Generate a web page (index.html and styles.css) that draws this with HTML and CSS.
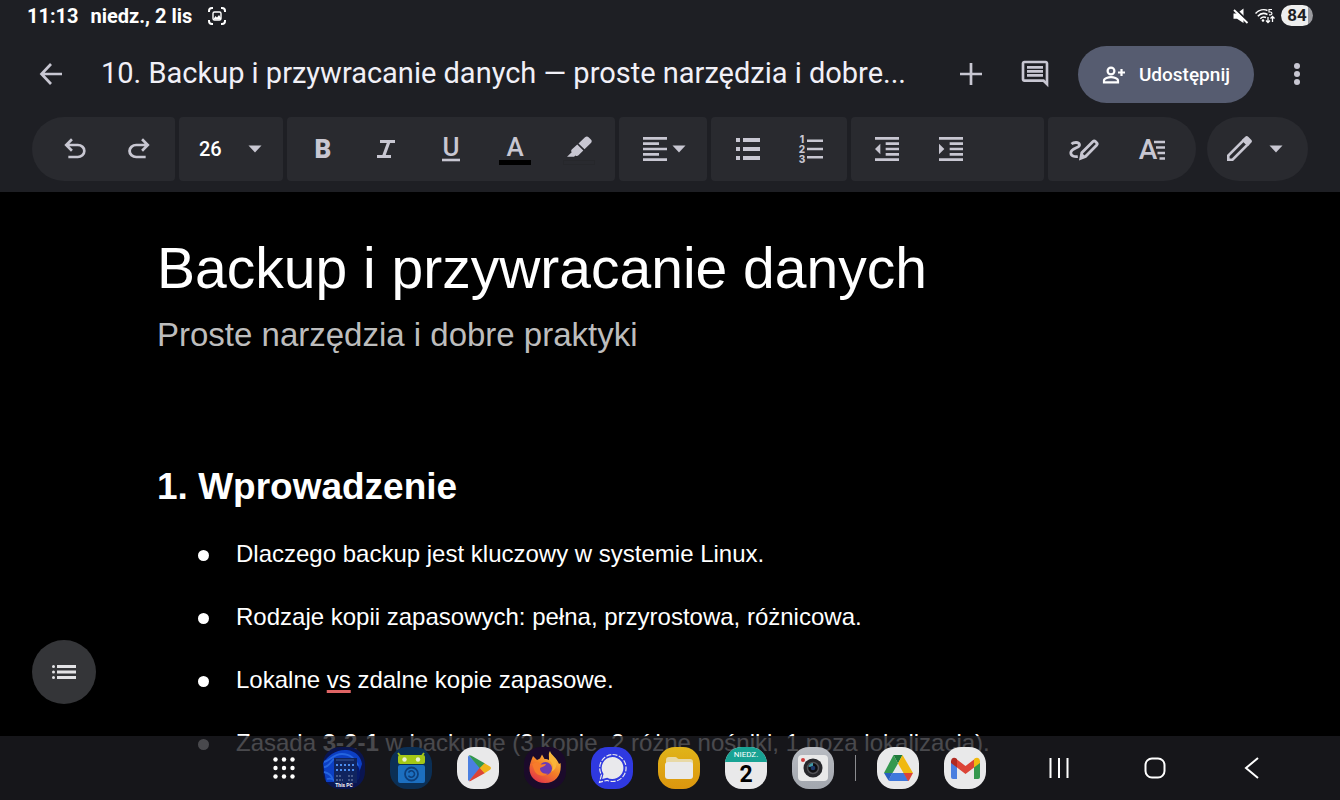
FILE: index.html
```
<!DOCTYPE html>
<html lang="pl">
<head>
    <meta charset="UTF-8">
    <meta name="viewport" content="width=device-width, initial-scale=1.0">
    <title>10. Backup i przywracanie danych</title>
    <link rel="stylesheet" href="styles.css">
</head>
<body>

    <header class="header">
        <div class="status-bar">
            <span>11:13</span>
            <span class="date">niedz., 2 lis</span>
            <svg class="capture" width="18" height="18" viewBox="0 0 18 18" fill="none" stroke="#fff" stroke-width="2">
                <path d="M1 5V4a3 3 0 0 1 3-3h1M13 1h1a3 3 0 0 1 3 3v1M17 13v1a3 3 0 0 1-3 3h-1M5 17H4a3 3 0 0 1-3-3v-1"/>
                <rect x="5" y="5" width="8" height="8" rx="1.5" stroke-width="1.4"/>
                <path d="M5.5 12l2-3 1.5 1.5L11 8l2 3v1.5H5.5z" fill="#fff" stroke="none"/>
            </svg>
            <div class="status-icons">
                <svg width="16" height="16" viewBox="0 0 16 16">
                    <path d="M.5 5.5H4L10.500.5V15L4 10.800H.5z" fill="#fff"/>
                    <path d="M2 .5l14 14" stroke="#1e1f24" stroke-width="2"/>
                    <path d="M1 2l13.500 13" stroke="#fff" stroke-width="1.8"/>
                </svg>
                <svg width="20" height="16" viewBox="0 0 20 16" fill="none" stroke="#fff" stroke-width="1.5">
                    <path d="M.5 5.500C4 1.800 9 1 12.500 2.500M2.800 8.200c2.500-2.700 6.500-3.400 9.700-1.700M5.300 10.700c1.500-1.500 3.600-2 5.700-1.200"/>
                    <circle cx="8" cy="12.5" r="1.3" fill="#fff" stroke="none"/>
                    <path d="M17 1.500h-3v2.500h1.500a1.400 1.400 0 0 1 0 2.800H14" stroke-width="1.2"/>
                    <path d="M13 9v5.500M11 12.500l2 2 2-2M17.500 14V8.500M15.500 10.500l2-2 2 2" stroke-width="1.3"/>
                </svg>
                <span class="battery">84</span>
            </div>
        </div>

        <div class="app-bar">
            <button class="icon-btn" aria-label="Wstecz">
                <svg class="icon" viewBox="0 0 32 32" fill="none" stroke="currentColor" stroke-width="2.7"><path d="M27 16H7M16 6L6.500 16 16 26"/></svg>
            </button>
            <h1 class="file-name">10. Backup i przywracanie danych — proste narzędzia i dobre...</h1>
            <button class="icon-btn" aria-label="Wstaw">
                <svg class="icon" viewBox="0 0 32 32" fill="none" stroke="currentColor" stroke-width="2.7"><path d="M16 5v22M5 16h22"/></svg>
            </button>
            <button class="icon-btn" aria-label="Komentarze">
                <svg class="icon" viewBox="0 0 24 24" fill="currentColor"><path d="M21.990 4c0-1.100-.89-2-1.990-2H4c-1.100 0-2 .9-2 2v12c0 1.100.9 2 2 2h14l4 4-.01-18zM20 4v13.170L18.830 16H4V4h16zM6 12h12v2H6zm0-3h12v2H6zm0-3h12v2H6z"/></svg>
            </button>
            <button class="share-btn">
                <svg width="24" height="20" viewBox="0 0 24 20" fill="none" stroke="currentColor" stroke-width="2.2">
                    <circle cx="9" cy="6" r="3.4"/>
                    <path d="M2 17.300v-1.800c0-2.300 4.600-3.400 7-3.400s7 1.100 7 3.400v1.800zM19.500 4v7M16 7.500h7"/>
                </svg>
                Udostępnij
            </button>
            <button class="icon-btn" aria-label="Więcej opcji">
                <svg class="icon" viewBox="0 0 32 32" fill="currentColor"><circle cx="16" cy="8" r="3"/><circle cx="16" cy="16" r="3"/><circle cx="16" cy="24" r="3"/></svg>
            </button>
        </div>

        <div class="toolbar">
            <div class="group group-first">
                <button class="icon-btn" aria-label="Cofnij">
                    <svg class="icon" viewBox="0 -960 960 960" fill="currentColor"><path d="M280-200v-80h284q63 0 109.500-40T720-420q0-60-46.500-100T564-560H312l104 104-56 56-200-200 200-200 56 56-104 104h252q97 0 169.500 63T800-420q0 94-72.500 157T564-200H280Z"/></svg>
                </button>
                <button class="icon-btn" aria-label="Ponów">
                    <svg class="icon" viewBox="0 -960 960 960" fill="currentColor"><path d="M396-200q-97 0-169.500-63T154-420q0-94 72.500-157T396-640h252L544-744l56-56 200 200-200 200-56-56 104-104H396q-63 0-109.500 40T240-420q0 60 46.500 100T396-280h284v80H396Z"/></svg>
                </button>
            </div>
            <div class="group">
                <label class="size-box">
                    <select class="size-select" aria-label="Rozmiar czcionki">
                        <option>24</option>
                        <option selected>26</option>
                        <option>28</option>
                    </select>
                    <svg class="caret" viewBox="0 0 14 8" fill="currentColor"><path d="M.5.500h13L7 7.500z"/></svg>
                </label>
            </div>
            <div class="group">
                <button class="icon-btn" aria-label="Pogrubienie">
                    <svg class="icon" viewBox="0 0 32 32"><text class="glyph glyph-bold" x="16" y="25">B</text></svg>
                </button>
                <button class="icon-btn" aria-label="Kursywa">
                    <svg class="icon" viewBox="0 0 32 32" fill="none" stroke="currentColor" stroke-width="3.2"><path d="M9 8.500h15M6 23.500h14M18 8.500l-5.500 15"/></svg>
                </button>
                <button class="icon-btn" aria-label="Podkreślenie">
                    <svg class="icon" viewBox="0 0 32 32"><text class="glyph" x="16" y="23">U</text><path d="M7 27h18" stroke="currentColor" stroke-width="2.6"/></svg>
                </button>
                <button class="icon-btn" aria-label="Kolor tekstu">
                    <svg class="icon" viewBox="0 0 32 32"><text class="glyph" x="16" y="23">A</text><rect y="27" width="32" height="5" fill="#000"/></svg>
                </button>
                <button class="icon-btn" aria-label="Kolor wyróżnienia">
                    <svg class="icon" viewBox="0 0 32 32" fill="currentColor">
                        <path d="M15.500 10.500l6.500-6.200c1.200-1.200 2.500-1.200 3.600-.1l2.300 2.300c1.100 1.100 1.100 2.400 0 3.500L21.500 16.200zM14.300 11.600l6 5.800-4.800 4.800c-1 1-2 1.100-3 .3L11 23.800H4l4.700-4.600c-.8-1-.7-2 .3-3z"/>
                        <rect x=".5" y="27.5" width="31" height="4" fill="none" stroke="#26272b"/>
                    </svg>
                </button>
            </div>
            <div class="group">
                <button class="align-btn" aria-label="Wyrównanie">
                    <svg class="icon" viewBox="0 0 24 24" fill="currentColor"><path d="M3 3h18v2H3zM3 7h12v2H3zM3 11h18v2H3zM3 15h12v2H3zM3 19h18v2H3z"/></svg>
                    <svg class="caret" viewBox="0 0 14 8" fill="currentColor"><path d="M.5.500h13L7 7.500z"/></svg>
                </button>
            </div>
            <div class="group">
                <button class="icon-btn" aria-label="Lista punktowana">
                    <svg class="icon" viewBox="0 0 32 32" fill="currentColor"><path d="M5 5h4v4H5zM12 5h17v4H12zM5 14h4v4H5zM12 14h17v4H12zM5 23h4v4H5zM12 23h17v4H12z"/></svg>
                </button>
                <button class="icon-btn" aria-label="Lista numerowana">
                    <svg class="icon" viewBox="0 0 32 32" fill="currentColor">
                        <text class="digit" x="7" y="10">1</text>
                        <text class="digit" x="7" y="20">2</text>
                        <text class="digit" x="7" y="30">3</text>
                        <path d="M12 6.500h16V9H12zM12 14.700h16v2.500H12zM12 23h16v2.500H12z"/>
                    </svg>
                </button>
            </div>
            <div class="group group-wide">
                <button class="icon-btn" aria-label="Zmniejsz wcięcie">
                    <svg class="icon" viewBox="0 0 24 24" fill="currentColor"><path d="M11 17h10v-2H11v2zm-8-5l4 4V8l-4 4zm0 9h18v-2H3v2zM3 3v2h18V3H3zm8 6h10V7H11v2zm0 4h10v-2H11v2z"/></svg>
                </button>
                <button class="icon-btn" aria-label="Zwiększ wcięcie">
                    <svg class="icon" viewBox="0 0 24 24" fill="currentColor"><path d="M11 17h10v-2H11v2zM3 8v8l4-4-4-4zm0 13h18v-2H3v2zM3 3v2h18V3H3zm8 6h10V7H11v2zm0 4h10v-2H11v2z"/></svg>
                </button>
            </div>
            <div class="group group-last">
                <button class="icon-btn" aria-label="Pismo odręczne">
                    <svg class="icon" viewBox="0 0 32 32" fill="none" stroke="currentColor" stroke-width="2.8">
                        <path d="M3.500 11c2-1.800 7.500-2.500 8 .8.400 3.200-8.500 3.400-8.700 8 0 3.200 3.500 4.200 7 3.800"/>
                        <path d="M12.800 25.300l1-5.600L25 8.600c.8-.8 1.600-.8 2.400 0l1.200 1.200c.8.800.8 1.600 0 2.400L17.500 23.500z"/>
                        <path d="M14 20l3.500 3.500-5.500 2.500z" fill="currentColor" stroke="none"/>
                    </svg>
                </button>
                <button class="icon-btn" aria-label="Formatowanie">
                    <svg class="icon" viewBox="0 0 32 32">
                        <text class="glyph glyph-format" x="12" y="26">A</text>
                        <path d="M18 9h11M20 14.500h9M21.500 20H29M23.500 25.500H29" stroke="currentColor" stroke-width="2.4"/>
                    </svg>
                </button>
            </div>
            <div class="group group-mode">
                <button class="mode-btn" aria-label="Tryb edycji">
                    <svg class="icon" viewBox="0 0 32 32">
                        <path d="M5.300 26.700v-4.200L20.500 7.300l4.200 4.200L9.500 26.700z" fill="none" stroke="currentColor" stroke-width="2.6"/>
                        <path d="M19 7l3.200-3.200c1-1 2-1 3 0l3 3c1 1 1 2 0 3L25 13z" fill="currentColor"/>
                    </svg>
                    <svg class="caret" viewBox="0 0 14 8" fill="currentColor"><path d="M.5.500h13L7 7.500z"/></svg>
                </button>
            </div>
        </div>
    </header>

    <main class="document">
        <h2 class="doc-title">Backup i przywracanie danych</h2>
        <p class="doc-subtitle">Proste narzędzia i dobre praktyki</p>
        <h3 class="doc-heading">1. Wprowadzenie</h3>
        <ul class="doc-list">
            <li>Dlaczego backup jest kluczowy w systemie Linux.</li>
            <li>Rodzaje kopii zapasowych: pełna, przyrostowa, różnicowa.</li>
            <li>Lokalne <span class="misspelled">vs</span> zdalne kopie zapasowe.</li>
            <li>Zasada <b>3-2-1</b> w backupie (3 kopie, 2 różne nośniki, 1 poza lokalizacją).</li>
        </ul>
    </main>

    <button class="outline-btn" aria-label="Konspekt">
        <svg width="24" height="16" viewBox="0 0 24 16" fill="currentColor"><path d="M5 1h19v3H5zM5 6.500h19v3H5zM5 12h19v3H5z"/><circle cx="1.5" cy="2.5" r="1.5"/><circle cx="1.5" cy="8" r="1.5"/><circle cx="1.5" cy="13.5" r="1.5"/></svg>
    </button>

    <nav class="taskbar">
        <button class="all-apps" aria-label="Aplikacje">
            <svg width="24" height="24" viewBox="0 0 24 24" fill="#fff">
                <circle cx="3.5" cy="3.5" r="2.2"/><circle cx="12" cy="3.5" r="2.2"/><circle cx="20.5" cy="3.5" r="2.2"/>
                <circle cx="3.5" cy="12" r="2.2"/><circle cx="12" cy="12" r="2.2"/><circle cx="20.5" cy="12" r="2.2"/>
                <circle cx="3.5" cy="20.5" r="2.2"/><circle cx="12" cy="20.5" r="2.2"/><circle cx="20.5" cy="20.5" r="2.2"/>
            </svg>
        </button>
        <div class="apps">
            <button class="app app-pc" aria-label="This PC">
                <svg viewBox="0 0 42 42">
                    <path d="M0 16C5 8 14 2 24 3c9 1 14 7 15 14l-6 18H3z" fill="#0c3fc4"/>
                    <path d="M1 15c6-1 9-8 18-8 8 0 14 5 16 12M1 20c5 0 7-6 10-8M1 25c5 1 8 4 9 8M4 32c4-1 7 0 9 4" fill="none" stroke="#2565e0" stroke-width="1.8"/>
                    <path d="M33 17c4 4 5 9 3 15l-5 4z" fill="#071a6a"/>
                    <rect x="11" y="11" width="23" height="25" fill="#10245f"/>
                    <path d="M13 13h18" stroke="#3b5899" stroke-width="1"/>
                    <path d="M13 18h20M13 23h20" stroke="#4b8df0" stroke-width="2" stroke-dasharray="2 2"/>
                    <path d="M13 29h6M25 29h6M13 33h7M25 33h5" stroke="#7c8db4" stroke-width="1.2" stroke-dasharray="2 1"/>
                    <text class="pc-label" x="21" y="40">This PC</text>
                </svg>
            </button>
            <button class="app app-droid" aria-label="F-Droid">
                <svg viewBox="0 0 42 42">
                    <path d="M8 6l3 4M34 6l-3 4" stroke="#a4c716" stroke-width="1.8"/>
                    <rect x="8" y="8" width="27" height="9" rx="2" fill="#a4c716"/>
                    <circle cx="14.5" cy="12.5" r="2.2" fill="#e8efd0"/><circle cx="28" cy="12.5" r="2.2" fill="#e8efd0"/>
                    <rect x="8" y="18" width="27" height="18" rx="2" fill="#1c6fc0"/>
                    <circle cx="21.5" cy="27" r="6.5" fill="none" stroke="#0d3f7c" stroke-width="1.8"/>
                    <path d="M18.500 25.500a3.200 3.200 0 1 1 0 3" fill="none" stroke="#0d3f7c" stroke-width="1.6"/>
                </svg>
            </button>
            <button class="app app-light" aria-label="Sklep Play">
                <svg viewBox="0 0 42 42">
                    <path d="M12 8.500L24 21 12 34c-.8-.4-1-1-1-2V10.500c0-1 .3-1.600 1-2z" fill="#4a7fe0"/>
                    <path d="M12 8.500c.8-.4 1.500-.3 2.500.3L28 16.500 23 21.500z" fill="#34984e"/>
                    <path d="M12 34c.8.400 1.500.200 2.500-.4L28 26l-5-5.500z" fill="#dc4437"/>
                    <path d="M27.500 16.200l5.500 3.300c1.300.8 1.300 2.400 0 3.200l-5.500 3.500L22.800 21z" fill="#f0b41a"/>
                </svg>
            </button>
            <button class="app app-fox" aria-label="Firefox">
                <svg viewBox="0 0 42 42">
                    <defs>
                        <linearGradient id="fox" x1=".8" y1="0" x2=".2" y2="1">
                            <stop offset="0" stop-color="#f7d34a"/><stop offset=".5" stop-color="#f58026"/><stop offset="1" stop-color="#e0304c"/>
                        </linearGradient>
                    </defs>
                    <path d="M9 9l4 4 3-1.500 2-4 2.500 4.500c2 0 4 .5 4.500 1 .3-3-1-6 1-9 1 4 7 7 9 13l1.500-1c1.500 11-4 20-15.500 20C11 36 5 29 5.500 20.500 6 16 7.500 13 9 9z" fill="url(#fox)"/>
                    <circle cx="21.500" cy="21.500" r="6.5" fill="#6c3ab5"/>
                    <path d="M8 17c4-2 7-1.500 9 .5l5-.5c-1 3-5 2.500-6 4.500 0 3 3 6 8 5-4 4-12 2.500-14-4z" fill="#f77b2b"/>
                    <path d="M25 13c4 3 5 8 2 12 8-4 7-13-2-19z" fill="#f9b439"/>
                </svg>
            </button>
            <button class="app app-signal" aria-label="Signal">
                <svg viewBox="0 0 42 42">
                    <path d="M21.500 10a11 11 0 1 1-5.300 20.700l-5 1.300 1.300-5A11 11 0 0 1 21.500 10z" fill="#e9e9ec"/>
                    <path d="M21.500 7.500a13.500 13.500 0 1 1-5.500 25.800l-7.500 2 2-7.500A13.500 13.500 0 0 1 21.500 7.500z" fill="none" stroke="#e9e9ec" stroke-width="1.2" stroke-dasharray="5 1.5"/>
                </svg>
            </button>
            <button class="app app-files" aria-label="Moje pliki">
                <svg viewBox="0 0 42 42">
                    <path d="M8 13c0-2 1-3 3-3h6c2 0 2.500 2 4 2h11c2 0 3 1 3 3v5H8z" fill="#e8d9a6"/>
                    <rect x="7" y="15" width="28" height="17" rx="3" fill="#e9e9e9"/>
                </svg>
            </button>
            <button class="app app-light app-calendar" aria-label="Kalendarz">
                <span class="cal-month">NIEDZ.</span>
                <span class="cal-day">2</span>
            </button>
            <button class="app app-camera" aria-label="Aparat">
                <svg viewBox="0 0 42 42">
                    <rect x="6" y="8" width="30" height="26" rx="4" fill="#e9e9e9"/>
                    <circle cx="11" cy="13" r="2" fill="#d03b3b"/>
                    <circle cx="21" cy="21" r="9.5" fill="#26262a"/>
                    <circle cx="21" cy="21" r="5.5" fill="#0d0d10" stroke="#505054" stroke-width="1.5"/>
                    <path d="M16.500 20a5 5 0 0 1 4.500-4v3.500z" fill="#4199a8"/>
                    <circle cx="21" cy="21" r="2.3" fill="#1d3768"/>
                </svg>
            </button>
        </div>
        <div class="divider"></div>
        <div class="apps">
            <button class="app app-light" aria-label="Dysk">
                <svg viewBox="0 0 42 42">
                    <path d="M16.500 8h9L21 16.500z" fill="#1f7a3b"/>
                    <path d="M25.500 8L36 26h-9.500l-5.500-9.500z" fill="#f0b90f"/>
                    <path d="M15.500 26H27l4.500 8H13q-1 0-1.500-.8z" fill="#4078dc"/>
                    <path d="M26.500 26H36l-4 7.500-1 .5z" fill="#dc4437"/>
                    <path d="M16.500 8L21 16.500 15.500 26H7z" fill="#34984e"/>
                    <path d="M7 26h8.500l-4 7.500z" fill="#2960c0"/>
                </svg>
            </button>
            <button class="app app-light" aria-label="Gmail">
                <svg viewBox="0 0 42 42">
                    <path d="M7 14l6 5v13H9q-2 0-2-2z" fill="#4a7fe0"/>
                    <path d="M36 14l-6 5v13h4q2 0 2-2z" fill="#34984e"/>
                    <path d="M13 12.500l8.500 6.500 8.500-6.500v8L21.500 27 13 20.500z" fill="#dc4437"/>
                    <path d="M7 14.500c0-4 3.500-5 6-2.500v8.500l-6-4.500z" fill="#b02a22"/>
                    <path d="M36 14.500c0-4-3.500-5-6-2.500v8.500l6-4.500z" fill="#f0b90f"/>
                </svg>
            </button>
        </div>
        <div class="system-keys">
            <button aria-label="Ostatnie">
                <svg width="22" height="22" viewBox="0 0 22 22" stroke="#fff" stroke-width="2"><path d="M2.500 1v20M11 1v20M19.500 1v20"/></svg>
            </button>
            <button aria-label="Ekran główny">
                <svg width="22" height="22" viewBox="0 0 22 22" fill="none" stroke="#fff" stroke-width="2"><rect x="1.5" y="1.5" width="19" height="19" rx="6.5"/></svg>
            </button>
            <button aria-label="Wróć">
                <svg width="22" height="22" viewBox="0 0 22 22" fill="none" stroke="#fff" stroke-width="2"><path d="M18 1L6 11l12 10"/></svg>
            </button>
        </div>
    </nav>

</body>
</html>
```

FILE: styles.css
```
* {
    box-sizing: border-box;
}
body {
    margin: 0;
    height: 100vh;
    display: flex;
    flex-direction: column;
    overflow: hidden;
    background: #000;
    color: #fff;
    font-family: "Liberation Sans", Arial, sans-serif;
}
button {
    border: none;
    padding: 0;
    background: none;
    color: inherit;
    font: inherit;
    cursor: pointer;
}
svg {
    display: block;
    flex-shrink: 0;
}

/* Header */
.header {
    flex-shrink: 0;
    padding-bottom: 11px;
    background: #1e1f24;
    color: #c8c7d2;
    font-family: Roboto, sans-serif;
}
.status-bar {
    display: flex;
    align-items: center;
    height: 32px;
    padding: 0 27px;
    color: #fff;
    font-size: 20px;
    font-weight: 700;
}
.date {
    margin: 0 16px 0 12px;
}
.status-icons {
    display: flex;
    align-items: center;
    gap: 6px;
    margin-left: auto;
}
.battery {
    width: 32px;
    height: 21px;
    margin-bottom: 2px;
    border-radius: 11px;
    background: linear-gradient(to right, #eee 84%, #9a9a9f 84%);
    color: #1e1f24;
    font-size: 17px;
    line-height: 21px;
    text-align: center;
}
.app-bar {
    display: flex;
    align-items: center;
    height: 85px;
    padding: 0 11px 0 19px;
}
.icon {
    width: 32px;
    height: 32px;
}
.icon-btn {
    display: flex;
    align-items: center;
    justify-content: center;
    flex-shrink: 0;
    width: 64px;
    height: 64px;
}
.app-bar .icon-btn {
    margin-bottom: 1px;
}
.file-name {
    flex: 1;
    min-width: 0;
    margin: 0 0 3px 18px;
    overflow: hidden;
    color: #f1f0f7;
    font-size: 29px;
    font-weight: 400;
    line-height: 40px;
    white-space: nowrap;
}
.share-btn {
    display: flex;
    align-items: center;
    flex-shrink: 0;
    gap: 13px;
    height: 57px;
    margin: 0 11px;
    padding: 0 24px;
    border-radius: 29px;
    background: #565c70;
    color: #fff;
    font-size: 19px;
    font-weight: 500;
}

/* Formatting toolbar */
.toolbar {
    display: flex;
    gap: 4px;
    padding: 0 32px;
}
.group {
    display: flex;
    height: 64px;
    padding: 0 4px;
    border-radius: 4px;
    background: #292a2f;
}
.group-first {
    padding-left: 11px;
    border-radius: 32px 4px 4px 32px;
}
.group-wide {
    flex: 1;
}
.group-last {
    gap: 4px;
    padding-right: 12px;
    border-radius: 4px 32px 32px 4px;
}
.group-mode {
    margin-left: 7px;
    border-radius: 32px;
}
.size-box {
    display: grid;
    align-items: center;
    width: 96px;
}
.size-select,
.size-box .caret {
    grid-area: 1 / 1;
}
.size-select {
    appearance: none;
    height: 64px;
    padding: 0 16px;
    border: none;
    background: none;
    color: #fff;
    font-family: Roboto, sans-serif;
    font-size: 20px;
    font-weight: 500;
}
.size-box .caret {
    justify-self: end;
    margin-right: 17px;
    pointer-events: none;
}
.caret {
    width: 14px;
    height: 8px;
}
.align-btn,
.mode-btn {
    display: flex;
    align-items: center;
}
.align-btn {
    padding: 0 17px 0 16px;
    gap: 1px;
}
.mode-btn {
    padding: 0 21px 0 12px;
    gap: 14px;
}
.glyph {
    fill: currentColor;
    font-family: Roboto, sans-serif;
    font-size: 26px;
    font-weight: 500;
    text-anchor: middle;
}
.glyph-bold {
    font-weight: 900;
}
.glyph-format {
    font-size: 28px;
}
.digit {
    font-family: Inter, sans-serif;
    font-size: 10px;
    font-weight: 800;
    text-anchor: middle;
}

/* Document */
.document {
    flex: 1;
    min-height: 0;
    padding: 43px 157px 0;
    overflow: hidden;
}
.doc-title {
    margin: 0;
    font-size: 57px;
    font-weight: 400;
    line-height: 66px;
}
.doc-subtitle {
    margin: 15px 0 112px;
    color: #bdbdbd;
    font-size: 33px;
    line-height: 38px;
}
.doc-heading {
    margin: 0 0 32px;
    font-size: 37px;
    line-height: 42px;
}
.doc-list {
    margin: 0;
    padding: 0;
    list-style: none;
    font-size: 24px;
    line-height: 27px;
}
.doc-list li {
    margin-bottom: 36px;
    white-space: nowrap;
}
.doc-list li::before {
    content: "";
    display: inline-block;
    width: 11px;
    height: 11px;
    margin: 0 27px 0 41px;
    border-radius: 50%;
    background: #fff;
    vertical-align: 1px;
}
.misspelled {
    text-decoration: underline 3px #e06666;
    text-decoration-skip-ink: none;
    text-underline-offset: 2px;
}
.outline-btn {
    position: absolute;
    left: 32px;
    bottom: 96px;
    display: flex;
    align-items: center;
    justify-content: center;
    width: 64px;
    height: 64px;
    border-radius: 50%;
    background: #343538;
    color: #e3e3e6;
}

/* Taskbar over the document */
.taskbar {
    position: absolute;
    right: 0;
    bottom: 0;
    left: 0;
    display: flex;
    align-items: center;
    justify-content: flex-end;
    height: 64px;
    padding-right: 41px;
    background: rgba(27, 28, 32, 0.8);
}
.all-apps {
    display: flex;
    justify-content: center;
    width: 42px;
    margin-right: 18px;
}
.apps {
    display: flex;
    gap: 25px;
}
.app {
    width: 42px;
    height: 42px;
    border-radius: 17px;
    overflow: hidden;
}
.app-light {
    background: #e9e9ea;
}
.app-pc {
    background: #0a1550;
}
.pc-label {
    fill: #fff;
    font-family: Roboto, sans-serif;
    font-size: 5px;
    font-weight: 700;
    text-anchor: middle;
}
.app-droid {
    background: #0b2f55;
}
.app-fox {
    background: #1b0a2b;
}
.app-signal {
    background: #2f39e0;
}
.app-files {
    background: linear-gradient(#e0b419, #dc960e);
}
.app-camera {
    background: linear-gradient(#b9bcc2, #a2a6ad);
}
.app-calendar {
    display: flex;
    flex-direction: column;
    align-items: center;
    color: #000;
    font-family: Roboto, sans-serif;
}
.cal-month {
    width: 100%;
    background: #18a394;
    color: #fff;
    font-size: 8px;
    line-height: 15px;
}
.cal-day {
    font-size: 23px;
    font-weight: 700;
    line-height: 25px;
}
.divider {
    width: 1px;
    height: 26px;
    margin: 0 21px;
    background: #8b8c90;
}
.system-keys {
    display: flex;
    margin-left: 25px;
}
.system-keys button {
    display: flex;
    align-items: center;
    justify-content: center;
    width: 96px;
    height: 64px;
}
```
